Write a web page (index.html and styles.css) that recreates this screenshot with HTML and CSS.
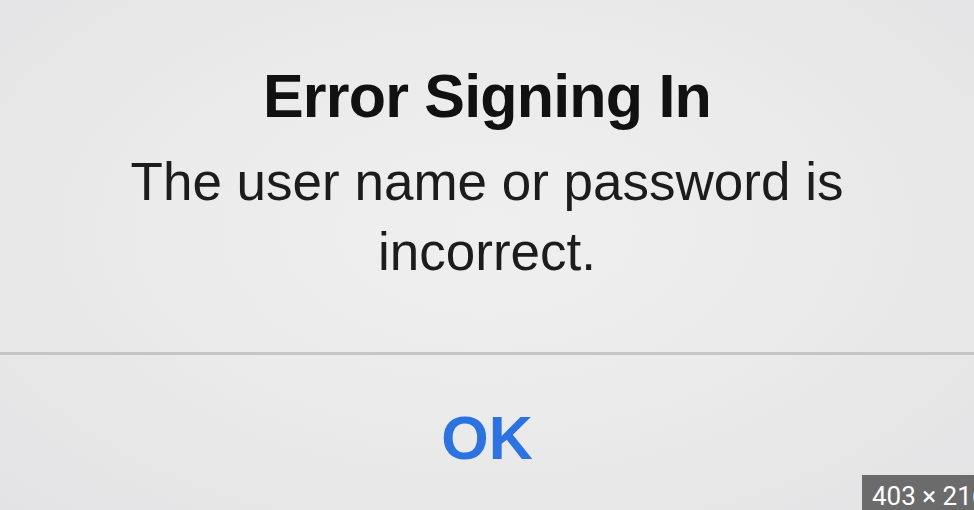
FILE: index.html
```html
<!DOCTYPE html>
<html lang="en">
<head>
  <meta charset="UTF-8">
  <meta name="viewport" content="width=device-width, initial-scale=1.0">
  <title>Error Signing In</title>
  <link rel="stylesheet" href="styles.css">
</head>
<body>
  <div class="alert">
    <div class="alert-body">
      <h1 class="alert-title">Error Signing In</h1>
      <p class="alert-message">The user name or password is<br>incorrect.</p>
    </div>
    <div class="alert-actions">
      <button class="alert-button">OK</button>
    </div>
  </div>
  <div class="size-badge">403 × 216</div>
</body>
</html>
```

FILE: styles.css
```css
/* base */
body {
  margin: 0;
  padding: 0;
  width: 974px;
  height: 510px;
  overflow: hidden;
  position: relative;
  font-family: 'Liberation Sans', Arial, sans-serif;
  background: radial-gradient(ellipse at 50% 45%, #efefef 0%, #ebebeb 45%, #e3e3e5 100%);
}

.alert {
  display: flex;
  flex-direction: column;
  height: 100%;
}

.alert-body {
  height: 355px;
  box-sizing: border-box;
  padding-top: 61px;
  text-align: center;
  border-bottom: 3px solid #c5c5c7;
}

.alert-title {
  margin: 0;
  font-size: 61px;
  line-height: 70px;
  font-weight: bold;
  color: #111111;
  letter-spacing: -0.8px;
}

.alert-message {
  margin: 16px 0 0;
  font-size: 53px;
  line-height: 70px;
  color: #1c1c1c;
}

.alert-actions {
  display: flex;
  justify-content: center;
  padding-top: 48px;
}

.alert-button {
  background: none;
  border: none;
  padding: 0;
  font-family: inherit;
  font-size: 61px;
  line-height: 70px;
  font-weight: bold;
  color: #2b73e3;
  cursor: pointer;
}

.size-badge {
  position: absolute;
  left: 862px;
  top: 475px;
  height: 40px;
  padding: 4px 10px 0;
  box-sizing: border-box;
  background: #6b6b6b;
  color: #ffffff;
  font-family: Roboto, 'Liberation Sans', sans-serif;
  font-size: 26px;
  line-height: 34px;
  white-space: nowrap;
}
```
